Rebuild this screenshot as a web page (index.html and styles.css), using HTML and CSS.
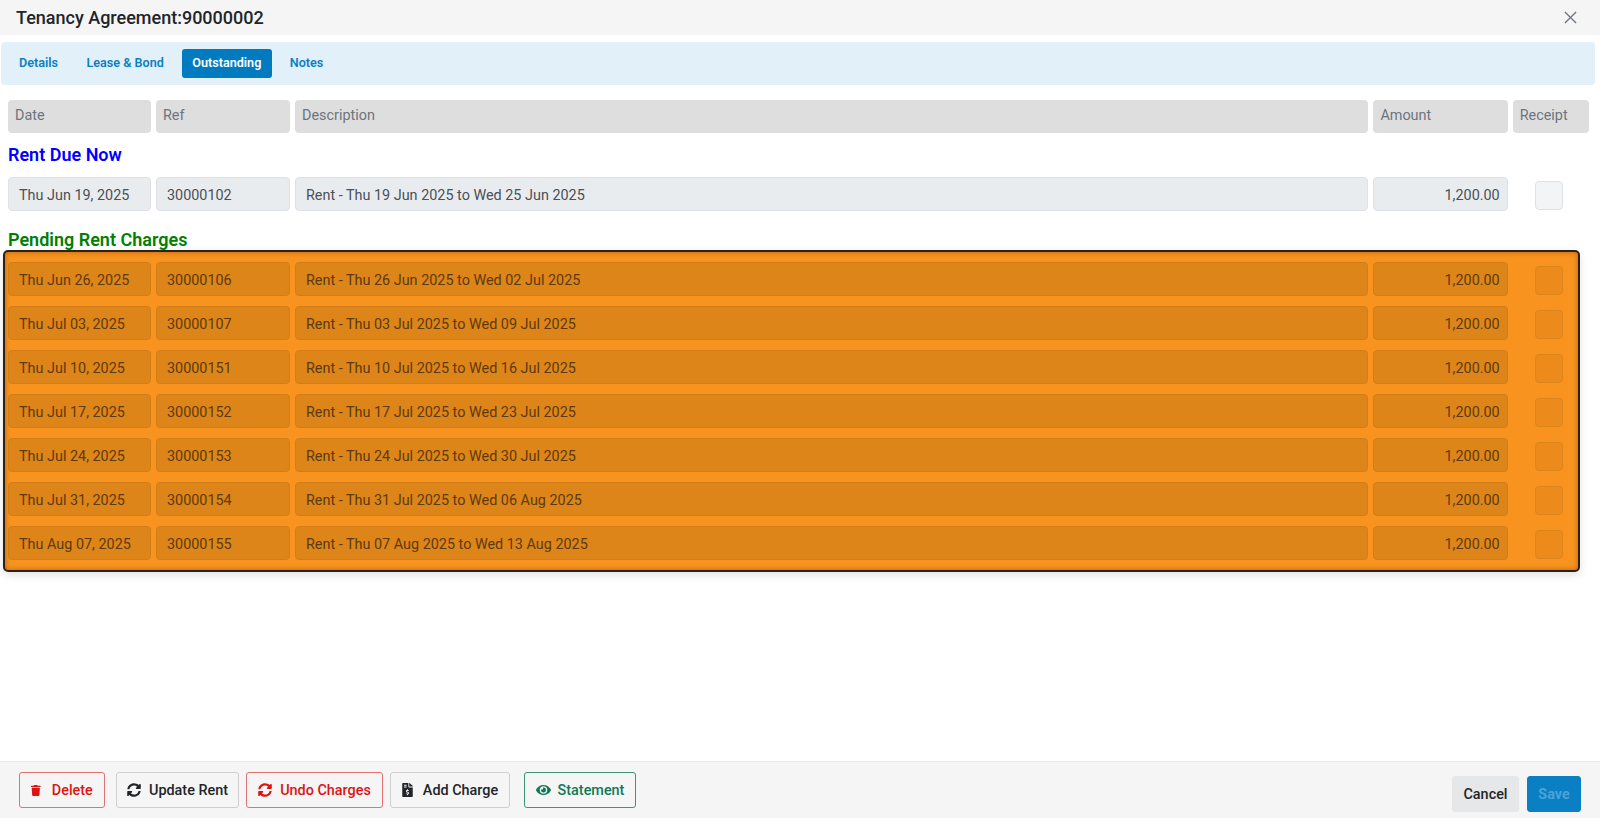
FILE: index.html
```html
<!DOCTYPE html>
<html lang="en">
<head>
<meta charset="utf-8">
<title>Tenancy Agreement</title>
<link rel="stylesheet" href="styles.css">
</head>
<body>
<div class="modal">
  <header class="modal-head">
    <h1 class="title">Tenancy Agreement:90000002</h1>
    <svg class="close" viewBox="0 0 14 14"><path d="M1 1l12 12M13 1L1 13"/></svg>
  </header>
  <nav class="tabs">
    <a class="tab">Details</a>
    <a class="tab">Lease &amp; Bond</a>
    <a class="tab active">Outstanding</a>
    <a class="tab">Notes</a>
  </nav>
  <main class="content">
    <div class="row head-row">
      <div class="hcell">Date</div><div class="hcell">Ref</div><div class="hcell">Description</div><div class="hcell">Amount</div><div class="hcell">Receipt</div>
    </div>
    <h2 class="section due">Rent Due Now</h2>
    <div class="row">
      <div class="cell">Thu Jun 19, 2025</div><div class="cell">30000102</div><div class="cell">Rent - Thu 19 Jun 2025 to Wed 25 Jun 2025</div><div class="cell num">1,200.00</div><div class="check"></div>
    </div>
    <h2 class="section pending">Pending Rent Charges</h2>
    <div class="panel">
      <div class="row"><div class="cell">Thu Jun 26, 2025</div><div class="cell">30000106</div><div class="cell">Rent - Thu 26 Jun 2025 to Wed 02 Jul 2025</div><div class="cell num">1,200.00</div><div class="check"></div></div>
      <div class="row"><div class="cell">Thu Jul 03, 2025</div><div class="cell">30000107</div><div class="cell">Rent - Thu 03 Jul 2025 to Wed 09 Jul 2025</div><div class="cell num">1,200.00</div><div class="check"></div></div>
      <div class="row"><div class="cell">Thu Jul 10, 2025</div><div class="cell">30000151</div><div class="cell">Rent - Thu 10 Jul 2025 to Wed 16 Jul 2025</div><div class="cell num">1,200.00</div><div class="check"></div></div>
      <div class="row"><div class="cell">Thu Jul 17, 2025</div><div class="cell">30000152</div><div class="cell">Rent - Thu 17 Jul 2025 to Wed 23 Jul 2025</div><div class="cell num">1,200.00</div><div class="check"></div></div>
      <div class="row"><div class="cell">Thu Jul 24, 2025</div><div class="cell">30000153</div><div class="cell">Rent - Thu 24 Jul 2025 to Wed 30 Jul 2025</div><div class="cell num">1,200.00</div><div class="check"></div></div>
      <div class="row"><div class="cell">Thu Jul 31, 2025</div><div class="cell">30000154</div><div class="cell">Rent - Thu 31 Jul 2025 to Wed 06 Aug 2025</div><div class="cell num">1,200.00</div><div class="check"></div></div>
      <div class="row"><div class="cell">Thu Aug 07, 2025</div><div class="cell">30000155</div><div class="cell">Rent - Thu 07 Aug 2025 to Wed 13 Aug 2025</div><div class="cell num">1,200.00</div><div class="check"></div></div>
    </div>
  </main>
  <footer class="foot">
    <div class="foot-left">
      <button class="btn red b-delete"><svg class="ico trash" viewBox="0 0 448 512"><path d="M432 32H312l-9.4-18.7A24 24 0 0 0 281.1 0H166.8a23.72 23.72 0 0 0-21.4 13.3L136 32H16A16 16 0 0 0 0 48v32a16 16 0 0 0 16 16h416a16 16 0 0 0 16-16V48a16 16 0 0 0-16-16zM53.2 467a48 48 0 0 0 47.9 45h245.8a48 48 0 0 0 47.9-45L416 128H32z"/></svg><span class="lbl">Delete</span></button>
      <button class="btn grey b-update"><svg class="ico" viewBox="0 0 512 512"><path d="M370.72 133.28C339.458 104.008 298.888 87.962 255.848 88c-77.458.068-144.328 53.178-162.791 126.85-1.344 5.363-6.122 9.15-11.651 9.15H24.103c-7.498 0-13.194-6.807-11.807-14.176C33.933 94.924 134.813 8 256 8c66.448 0 126.791 26.136 171.315 68.685L463.03 40.97C478.149 25.851 504 36.559 504 57.941V192c0 13.255-10.745 24-24 24H345.941c-21.382 0-32.09-25.851-16.971-40.971l41.75-41.749zM32 296h134.059c21.382 0 32.09 25.851 16.971 40.971l-41.75 41.75c31.262 29.273 71.835 45.319 114.876 45.28 77.418-.07 144.315-53.144 162.787-126.849 1.344-5.363 6.122-9.15 11.651-9.15h57.304c7.498 0 13.194 6.807 11.807 14.176C478.067 417.076 377.187 504 256 504c-66.448 0-126.791-26.136-171.315-68.685L48.97 471.03C33.851 486.149 8 475.441 8 454.059V320c0-13.255 10.745-24 24-24z"/></svg><span class="lbl">Update Rent</span></button>
      <button class="btn red b-undo"><svg class="ico" viewBox="0 0 512 512"><path d="M370.72 133.28C339.458 104.008 298.888 87.962 255.848 88c-77.458.068-144.328 53.178-162.791 126.85-1.344 5.363-6.122 9.15-11.651 9.15H24.103c-7.498 0-13.194-6.807-11.807-14.176C33.933 94.924 134.813 8 256 8c66.448 0 126.791 26.136 171.315 68.685L463.03 40.97C478.149 25.851 504 36.559 504 57.941V192c0 13.255-10.745 24-24 24H345.941c-21.382 0-32.09-25.851-16.971-40.971l41.75-41.749zM32 296h134.059c21.382 0 32.09 25.851 16.971 40.971l-41.75 41.75c31.262 29.273 71.835 45.319 114.876 45.28 77.418-.07 144.315-53.144 162.787-126.849 1.344-5.363 6.122-9.15 11.651-9.15h57.304c7.498 0 13.194 6.807 11.807 14.176C478.067 417.076 377.187 504 256 504c-66.448 0-126.791-26.136-171.315-68.685L48.97 471.03C33.851 486.149 8 475.441 8 454.059V320c0-13.255 10.745-24 24-24z"/></svg><span class="lbl">Undo Charges</span></button>
      <button class="btn grey b-add"><svg class="ico file" viewBox="0 0 384 512"><path d="M377 105L279.1 7c-4.5-4.5-10.6-7-17-7H256v128h128v-6.1c0-6.3-2.5-12.4-7-16.9zm-153 31V0H24C10.7 0 0 10.7 0 24v464c0 13.3 10.7 24 24 24h336c13.3 0 24-10.7 24-24V160H248c-13.2 0-24-10.8-24-24zM64 72c0-4.42 3.58-8 8-8h80c4.42 0 8 3.58 8 8v16c0 4.42-3.58 8-8 8H72c-4.42 0-8-3.58-8-8V72zm0 80v-16c0-4.42 3.58-8 8-8h80c4.42 0 8 3.58 8 8v16c0 4.42-3.58 8-8 8H72c-4.42 0-8-3.58-8-8zm144 263.88V440c0 4.42-3.58 8-8 8h-16c-4.42 0-8-3.58-8-8v-24.29c-11.29-.58-22.27-4.52-31.37-11.35-3.9-2.93-4.1-8.77-.57-12.14l11.75-11.21c2.77-2.64 6.89-2.76 10.13-.73 3.87 2.42 8.26 3.72 12.82 3.72h28.11c6.5 0 11.8-5.92 11.8-13.19 0-5.95-3.61-11.19-8.77-12.73l-45-13.5c-18.59-5.58-31.58-23.42-31.58-43.39 0-24.52 19.05-44.44 42.67-45.07V232c0-4.42 3.58-8 8-8h16c4.42 0 8 3.58 8 8v24.29c11.29.58 22.27 4.51 31.37 11.35 3.9 2.93 4.1 8.77.57 12.14l-11.75 11.21c-2.77 2.64-6.89 2.76-10.13.73-3.87-2.43-8.26-3.72-12.82-3.72h-28.11c-6.5 0-11.8 5.92-11.8 13.19 0 5.95 3.61 11.19 8.77 12.73l45 13.5c18.59 5.58 31.58 23.42 31.58 43.39 0 24.53-19.05 44.44-42.67 45.07z"/></svg><span class="lbl">Add Charge</span></button>
      <button class="btn green b-statement"><svg class="ico eye" viewBox="0 0 576 512"><path d="M572.52 241.4C518.29 135.59 410.93 64 288 64S57.68 135.64 3.48 241.41a32.35 32.35 0 0 0 0 29.19C57.71 376.41 165.07 448 288 448s230.32-71.64 284.52-177.41a32.35 32.35 0 0 0 0-29.19zM288 400a144 144 0 1 1 144-144 143.93 143.93 0 0 1-144 144zm0-240a95.31 95.31 0 0 0-25.31 3.79 47.85 47.85 0 0 1-66.9 66.9A95.78 95.78 0 1 0 288 160z"/></svg><span class="lbl">Statement</span></button>
    </div>
    <div class="foot-right">
      <button class="btn cancel"><span class="lbl">Cancel</span></button>
      <button class="btn save"><span class="lbl">Save</span></button>
    </div>
  </footer>
</div>
</body>
</html>
```
FILE: styles.css
```css
* { box-sizing: border-box; }
html, body { margin: 0; height: 100%; }
body { font-family: Roboto, "Liberation Sans", sans-serif; color: #212529; background: #fff; overflow: hidden; }
.modal { height: 818px; display: flex; flex-direction: column; }
.modal-head { height: 35px; flex: none; background: #f5f5f5; display: flex; align-items: center; justify-content: space-between; padding: 0 23px 0 16px; }
.title { margin: 0; font-size: 18px; font-weight: 500; line-height: 1; color: #212529; }
.close { width: 13px; height: 13px; fill: none; stroke: #6c757d; stroke-width: 1.4; }
.tabs { flex: none; height: 43px; margin: 7px 5px 0 1px; background: #e1f0f9; border-radius: 4px; display: flex; align-items: center; padding-left: 8px; }
.tab { height: 29px; line-height: 27px; padding: 0 10px; font-size: 12.6px; font-weight: 600; color: #0a7fc2; border-radius: 3px; margin-right: 8.5px; }
.active { background: #007bc0; color: #fff; padding-right: 11px; margin-right: 7.5px; }
.content { flex: 1; padding: 14.5px 12px 0 8px; }
.row { display: grid; grid-template-columns: 143px 134px 1073.4px 134.3px 76px; column-gap: 5px; height: 34px; }
.hcell { background: #dedede; border-radius: 4px; font-size: 14.4px; color: #6c757d; padding: 7.5px 7px 0; line-height: 18px; height: 33.5px; font-weight: 400; }
.section { margin: 0; font-size: 18px; font-weight: 600; line-height: 20px; }
.due { color: #0000ff; margin-top: 11.5px; margin-bottom: 12px; }
.pending { color: #008000; margin-top: 18.5px; margin-bottom: 0.5px; }
.cell { background: #e9ecef; border: 1px solid #dee2e6; border-radius: 4px; font-size: 14.4px; color: #495057; padding: 2px 7px 0 10px; line-height: 32px; height: 34px; white-space: nowrap; }
.num { text-align: right; }
.check { width: 28px; height: 28.5px; margin: 4px 0 0 22.5px; background: #f3f4f5; border: 1px solid #dee2e6; border-radius: 4px; }
.panel { margin: 0 0 0 -5px; width: 1577px; height: 322px; padding: 10px 0 0 3px; background: #f7931e; border: 2px solid #2b2118; border-radius: 5px; box-shadow: 0 3px 8px rgba(0,0,0,.12), inset 0 0 5px rgba(140,70,0,.6); }
.panel .row { margin-bottom: 10px; grid-template-columns: 143px 134px 1073.4px 134.3px 65px; }
.panel .cell { background: #de851a; border-color: #d27e18; color: #5c3a0c; }
.panel .check { background: #ec8b1c; border-color: #dc851a; }
.foot { flex: none; height: 57px; background: #f5f5f5; border-top: 1px solid #e9e9e9; display: flex; justify-content: space-between; padding: 0 19px; }
.foot-left { display: flex; align-items: flex-start; padding-top: 10px; }
.foot-right { display: flex; align-items: flex-start; padding-top: 14px; gap: 8px; }
.btn { height: 36px; border-radius: 3px; background: transparent; border: 1px solid; font: 500 14.4px/1 Roboto, "Liberation Sans", sans-serif; display: flex; align-items: center; justify-content: center; padding: 0; white-space: nowrap; }
.lbl { padding-top: 2px; }
.ico { width: 14px; height: 14px; fill: currentColor; margin-right: 8px; flex: none; }
.trash { width: 9.6px; height: 11px; margin-right: 11px; }
.file { width: 11px; height: 14px; margin-right: 10px; }
.eye { width: 15px; height: 14px; margin-right: 7px; }
.red { color: #dc1414; border-color: #e2716f; }
.grey { color: #212529; border-color: #cfcfcf; }
.green { color: #0f7a55; border-color: #3f9274; }
.b-delete { width: 86px; }
.b-update { width: 123px; margin-left: 11px; }
.b-undo { width: 137px; margin-left: 7px; }
.b-add { width: 120px; margin-left: 7px; }
.b-statement { width: 112px; margin-left: 14px; }
.cancel { width: 67px; border-color: #e6e7e9; background: #e6e7e9; color: #212529; }
.save { width: 54px; border-color: #0a7fc4; background: #0a7fc4; color: #4ba3d8; font-weight: 700; }
```
